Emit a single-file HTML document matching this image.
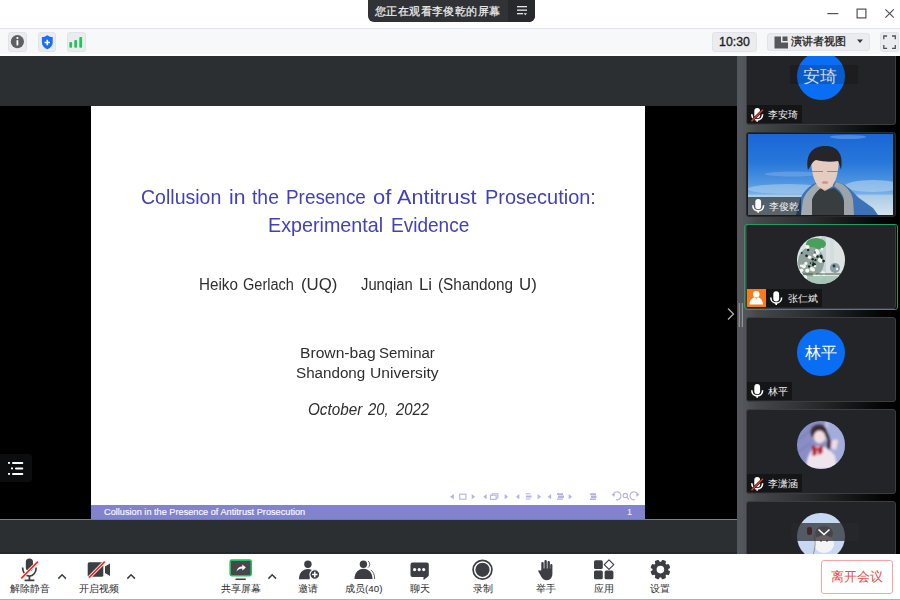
<!DOCTYPE html>
<html><head><meta charset="utf-8">
<style>
*{margin:0;padding:0;box-sizing:border-box}
html,body{width:900px;height:600px;overflow:hidden;background:#fff;font-family:"Liberation Sans",sans-serif}
.a{position:absolute}
#title{left:0;top:0;width:900px;height:28px;background:#fff}
#pill{left:368px;top:0;width:167px;height:22px;background:#303236;border-radius:0 0 6px 6px;overflow:hidden}
#pill .t{left:7px;top:2.5px;font-size:11px;letter-spacing:0.4px;-webkit-text-stroke:0.2px #f2f2f2;color:#f2f2f2;white-space:nowrap;line-height:16px}
#pill .m{left:140px;top:0;width:27px;height:22px;background:#27292c}
#tb{left:0;top:28px;width:900px;height:25.5px;background:#f7f8fa;border-top:1px solid #e3e4e7}
.ib{background:#ebecef;border:1px solid #e2e3e6;border-radius:3px}
#main{left:0;top:56px;width:737px;height:498px;background:linear-gradient(180deg,#2c2f32 0,#2c2f32 495.5px,#25282b 496.5px,#25282b 498px)}
#black{left:0;top:106px;width:737px;height:413px;background:#000}
#slide{left:91px;top:106px;width:553.6px;height:413px;background:#fff;overflow:hidden}
#teal{left:0;top:518.5px;width:737px;height:1.5px;background:#5b908e}
#sep{left:737px;top:56px;width:6px;height:498px;background:#54575b}
#panel{left:741px;top:56px;width:159px;height:498px;background:linear-gradient(90deg,#54575b 0%,#4f5256 4%,#45474b 10%,#2e3033 40%,#141516 70%,#050505 88%,#000 100%);overflow:hidden}
.tile{position:absolute;left:5px;width:150px;height:85px;background:#232427;border:1px solid #3b3d41;border-radius:3px;overflow:hidden}
.lb{position:absolute;left:0;bottom:0.8px;height:18px;background:#141517}
.nm{position:absolute;top:3px;font-size:10px;line-height:13px;color:#f0f0f0;white-space:nowrap}
.av{position:absolute;left:50px;width:47.5px;height:47.5px;border-radius:50%}
.avt{position:absolute;left:0;top:0;width:47.5px;height:47.5px;line-height:47.5px;text-align:center;color:#fff;font-size:16px}
#bot{left:0;top:553.8px;width:900px;height:46.2px;background:#fff}
#botline{left:0;top:598.6px;width:900px;height:1.4px;background:#a2b7b0}
.lbl{position:absolute;font-size:9.8px;color:#2c2c2c;white-space:nowrap;line-height:12px}

.w{position:absolute;white-space:nowrap;transform-origin:0 0}
.ttl{color:#4242b4;font-size:21px;line-height:24px}
.blk{color:#2e2e2e}
</style></head><body>
<div id="title" class="a"></div>
<div id="pill" class="a"><div class="t a">您正在观看李俊乾的屏幕</div><div class="m a"><svg width="27" height="22" style="position:absolute;left:0;top:0"><g fill="#e6e6e6"><rect x="9" y="6" width="10" height="1.3"/><rect x="9" y="9.5" width="10" height="1.3"/><rect x="9" y="13" width="6" height="1.3"/><path d="M15.5 13.2h3.5l-1.75 2z"/></g></svg></div></div>
<svg class="a" style="left:820px;top:0" width="80" height="28"><g stroke="#505256" stroke-width="1.2" fill="none"><path d="M7.3 13.6h11"/><rect x="37.1" y="9.1" width="8.8" height="8.8"/><path d="M65.4 9.3l8.4 8.4M73.8 9.3l-8.4 8.4"/></g></svg>
<div id="tb" class="a"></div>
<div class="a ib" style="left:8px;top:32px;width:19px;height:20px"></div>
<svg class="a" style="left:8px;top:32px" width="19" height="19"><circle cx="9.4" cy="9.6" r="6.6" fill="#5d5f63"/><rect x="8.5" y="8.2" width="1.8" height="5.2" fill="#fff"/><circle cx="9.4" cy="6" r="1.1" fill="#fff"/></svg>
<div class="a ib" style="left:37.5px;top:32px;width:18.5px;height:20px"></div>
<svg class="a" style="left:37.5px;top:32px" width="18" height="19"><path d="M9.3 3.2c1.8 1.3 3.5 1.9 5.4 1.9v5.2c0 3.5-2.4 5.8-5.4 7-3-1.2-5.4-3.5-5.4-7V5.1c1.9 0 3.6-.6 5.4-1.9z" fill="#1a6ff5"/><path d="M9.3 7.8v5.4M6.6 10.5h5.4" stroke="#fff" stroke-width="1.6"/></svg>
<div class="a ib" style="left:67px;top:32px;width:18.5px;height:20px"></div>
<svg class="a" style="left:67px;top:32px" width="18" height="19"><g fill="#1fc55a"><rect x="2.3" y="10" width="2.8" height="5.7" rx="1"/><rect x="7.3" y="8" width="2.8" height="7.7" rx="1"/><rect x="12.3" y="5" width="2.8" height="10.7" rx="1"/></g></svg>
<div class="a ib" style="left:712px;top:32px;width:45px;height:19.5px"></div>
<div class="a" style="left:712px;top:35px;width:45px;text-align:center;font-size:12.3px;line-height:15px;color:#1e1e1e;-webkit-text-stroke:0.35px #1e1e1e">10:30</div>
<div class="a ib" style="left:767px;top:32.5px;width:103px;height:18.5px"></div>
<svg class="a" style="left:774px;top:35.5px" width="15" height="13"><path d="M0.5 0.5h6.5v6h7v6h-13.5z" fill="#55575b"/><rect x="8.5" y="0.5" width="5" height="4.5" fill="#55575b"/></svg>
<div class="a" style="left:790.5px;top:34px;font-size:11px;line-height:15px;color:#1e1e1e;white-space:nowrap;-webkit-text-stroke:0.3px #1e1e1e">演讲者视图</div>
<svg class="a" style="left:856px;top:39px" width="8" height="5"><path d="M1 0.5h6l-3 3.5z" fill="#3a3a3a"/></svg>
<div class="a ib" style="left:880px;top:32px;width:19px;height:19.5px"></div>
<svg class="a" style="left:880px;top:32px" width="19" height="20"><g stroke="#505256" stroke-width="1.3" fill="none"><path d="M3.8 7.3V4h3.3M12 4h3.3v3.3M15.3 13v3.3H12M7.1 16.3H3.8V13"/></g></svg>
<div id="main" class="a"></div>
<div id="black" class="a"></div>
<div id="slide" class="a">
<span class="w ttl" style="left:49.77px;top:79.2px;font-size:21px;line-height:24px;font-style:normal;transform:scaleX(0.930)">Collusion</span>
<span class="w ttl" style="left:137.69px;top:79.2px;font-size:21px;line-height:24px;font-style:normal;transform:scaleX(1.007)">in</span>
<span class="w ttl" style="left:161.30px;top:79.2px;font-size:21px;line-height:24px;font-style:normal;transform:scaleX(0.921)">the</span>
<span class="w ttl" style="left:195.15px;top:79.2px;font-size:21px;line-height:24px;font-style:normal;transform:scaleX(0.900)">Presence</span>
<span class="w ttl" style="left:282.02px;top:79.2px;font-size:21px;line-height:24px;font-style:normal;transform:scaleX(1.050)">of</span>
<span class="w ttl" style="left:306.00px;top:79.2px;font-size:21px;line-height:24px;font-style:normal;transform:scaleX(1.032)">Antitrust</span>
<span class="w ttl" style="left:393.55px;top:79.2px;font-size:21px;line-height:24px;font-style:normal;transform:scaleX(0.950)">Prosecution:</span>
<span class="w ttl" style="left:176.66px;top:106.7px;font-size:21px;line-height:24px;font-style:normal;transform:scaleX(0.939)">Experimental</span>
<span class="w ttl" style="left:300.09px;top:106.7px;font-size:21px;line-height:24px;font-style:normal;transform:scaleX(0.906)">Evidence</span>
<span class="w blk" style="left:108.05px;top:170px;font-size:16px;line-height:18px;font-style:normal;transform:scaleX(0.950)">Heiko</span>
<span class="w blk" style="left:152.09px;top:170px;font-size:16px;line-height:18px;font-style:normal;transform:scaleX(0.909)">Gerlach</span>
<span class="w blk" style="left:210.32px;top:170px;font-size:16px;line-height:18px;font-style:normal;transform:scaleX(1.050)">(UQ)</span>
<span class="w blk" style="left:270.30px;top:170px;font-size:16px;line-height:18px;font-style:normal;transform:scaleX(0.923)">Junqian</span>
<span class="w blk" style="left:327.88px;top:170px;font-size:16px;line-height:18px;font-style:normal;transform:scaleX(1.050)">Li</span>
<span class="w blk" style="left:347.44px;top:170px;font-size:16px;line-height:18px;font-style:normal;transform:scaleX(0.960)">(Shandong</span>
<span class="w blk" style="left:427.98px;top:170px;font-size:16px;line-height:18px;font-style:normal;transform:scaleX(1.050)">U)</span>
<span class="w blk" style="left:208.69px;top:237.7px;font-size:15.5px;line-height:18px;font-style:normal;transform:scaleX(1.010)">Brown-bag</span>
<span class="w blk" style="left:287.83px;top:237.7px;font-size:15.5px;line-height:18px;font-style:normal;transform:scaleX(0.967)">Seminar</span>
<span class="w blk" style="left:205.12px;top:257.8px;font-size:15.5px;line-height:18px;font-style:normal;transform:scaleX(0.980)">Shandong</span>
<span class="w blk" style="left:278.89px;top:257.8px;font-size:15.5px;line-height:18px;font-style:normal;transform:scaleX(1.007)">University</span>
<span class="w blk" style="left:216.65px;top:295px;font-size:16px;line-height:18px;font-style:italic;transform:scaleX(0.954)">October</span>
<span class="w blk" style="left:277.40px;top:295px;font-size:16px;line-height:18px;font-style:italic;transform:scaleX(0.929)">20,</span>
<span class="w blk" style="left:304.60px;top:295px;font-size:16px;line-height:18px;font-style:italic;transform:scaleX(0.931)">2022</span>
<div class="a" style="left:0;top:399px;width:553.6px;height:14px;background:#8282cf"></div>
<div class="a" style="left:13px;top:400.8px;font-size:9.2px;line-height:10px;color:#fafaff;-webkit-text-stroke:0.15px #fafaff;white-space:nowrap">Collusion in the Presence of Antitrust Prosecution</div>
<div class="a" style="left:536px;top:400.8px;font-size:9.2px;line-height:10px;color:#f4f4fb">1</div>
</div>
<div id="teal" class="a"></div>
<svg class="a" style="left:445px;top:488px" width="200" height="16"><g transform="translate(-445,-488)" fill="#b4b4e2" stroke="none">
<path d="M450 496.7l3.8-2.6v5.2z"/><rect x="459.7" y="494.2" width="6.2" height="5" fill="none" stroke="#b4b4e2" stroke-width="1.1"/><path d="M475 496.7l-3.3-2.6v5.2z"/>
<path d="M483.3 496.7l3.3-2.6v5.2z"/><rect x="490.5" y="495.2" width="5.6" height="4.2" fill="none" stroke="#b4b4e2" stroke-width="1.1"/><path d="M492.3 495.2v-1.4h5.6v4.2h-1.7" fill="none" stroke="#b4b4e2" stroke-width="1.1"/><path d="M508 496.7l-3.3-2.6v5.2z"/>
<path d="M516 496.7l3.3-2.6v5.2z"/><path d="M525.5 493.3h5v1h-5zM526 495.5h5.5v2h-5.5zM525.5 498.6h5v1h-5z"/><path d="M541 496.7l-3.3-2.6v5.2z"/>
<path d="M547.8 496.7l3.3-2.6v5.2z"/><path d="M557 493.3h6v1.6h-6zM558 495.5h6v2.4h-6zM557 498.4h6v1.4h-6z"/><path d="M572 496.7l-3.3-2.6v5.2z"/>
<path d="M590 493.3h6v1.6h-6zM591 495.5h5.5v2.4h-5.5zM590 498.4h6v1.6h-6z"/>
<path d="M613 495.5a4 4 0 1 1 3 4.2" fill="none" stroke="#b4b4e2" stroke-width="1.1"/><path d="M611.5 494l3.5-.2-.8 3.2z"/>
<circle cx="625.3" cy="495.6" r="2.2" fill="none" stroke="#b4b4e2" stroke-width="1.1"/><path d="M626.8 497.2l2.2 2.4" stroke="#b4b4e2" stroke-width="1.2"/>
<path d="M638 495.5a4 4 0 1 0 -3 4.2" fill="none" stroke="#b4b4e2" stroke-width="1.1"/><path d="M639.5 494l-3.5-.2.8 3.2z"/>
</g></svg>
<div class="a" style="left:0;top:454px;width:32px;height:27.5px;background:#0c0d0f;border-radius:0 4px 4px 0"></div>
<svg class="a" style="left:0;top:454px" width="32" height="28"><g fill="#fff"><rect x="8" y="8" width="2" height="1.8"/><rect x="12" y="7.9" width="11.3" height="2" rx="1"/><rect x="11" y="13.5" width="2" height="1.8"/><rect x="15" y="13.4" width="8.3" height="2" rx="1"/><rect x="8" y="19" width="2" height="1.8"/><rect x="12" y="18.9" width="11.3" height="2" rx="1"/></g></svg>
<div id="sep" class="a"></div>
<div id="panel" class="a">
<div class="tile" style="top:-16.2px">
 <div class="av" style="top:11.2px;background:#0a6ef5"></div>
 <div class="a" style="left:43px;top:24.2px;width:68px;height:19px;background:rgba(0,0,0,0.17)"></div>
 <div class="a" style="left:56px;top:26.2px;font-size:16.5px;line-height:18px;color:#d6d6d6;white-space:nowrap">安琦</div>
 <div class="lb" style="width:55px"><svg class="a" style="left:3px;top:1.5px" width="15" height="16"><rect x="4.3" y="1" width="5.8" height="10.2" rx="2.9" fill="#fff"/><path d="M1.8 7.2c0 3.4 2.4 5.7 5.4 5.7s5.4-2.3 5.4-5.7" stroke="#fff" stroke-width="1.6" fill="none"/><path d="M7.2 12.8v2" stroke="#fff" stroke-width="1.6"/><path d="M1.5 14.2L13 2.8" stroke="#141517" stroke-width="2.6"/><path d="M1.5 14.2L13 2.8" stroke="#e8362f" stroke-width="1.4"/></svg><div class="nm" style="left:21px">李安琦</div></div>
</div>
<div class="tile" style="top:75.5px;border-color:#2a2b2e;background:#1a1b1d">
 <div class="a" id="vid" style="left:1px;top:1px;width:145px;height:81px;overflow:hidden;background:linear-gradient(180deg,#1a66d6 0%,#2777da 35%,#4f95e0 60%,#79b0e6 74%,#a9cbe6 76%,#cfe0ec 100%)"><svg class="a" style="left:0;top:0" width="145" height="81">
<defs><linearGradient id="sea" x1="0" y1="0" x2="0" y2="1"><stop offset="0" stop-color="#a9cbe6"/><stop offset="1" stop-color="#d3e3ee"/></linearGradient><filter id="bl"><feGaussianBlur stdDeviation="0.7"/></filter></defs>
<g filter="url(#bl)">
<rect x="0" y="61" width="145" height="20" fill="url(#sea)"/>
<ellipse cx="40" cy="55" rx="40" ry="5" fill="#a7cbee" opacity="0.6"/>
<ellipse cx="125" cy="52" rx="28" ry="6" fill="#b5d3f0" opacity="0.6"/>
<ellipse cx="45" cy="40" rx="28" ry="2.5" fill="#7fb2e6" opacity="0.5"/>
<ellipse cx="100" cy="3" rx="18" ry="2" fill="#7fb2e6" opacity="0.5"/>
<path d="M48 81l4-15c2-6 6-11 13-16l9-3h12l9 3c7 4 11 9 16 14l14 10 5 7z" fill="#3d72b8"/>
<path d="M53 81l2-15c2-6 6-11 14-17l5-1 2 4c-6 4-10 8-12 14v15z" fill="#a4a9ad"/>
<path d="M88 48l6 2c6 4 10 9 11 16l1 15h-10v-15c-1-6-4-10-10-14z" fill="#9ea3a7"/>
<path d="M64 81v-15c2-6 6-10 12-14l2 4 8-2c6 4 9 8 10 14v13z" fill="#393d41"/>
<path d="M69 42h16v10l-8 5-8-5z" fill="#d9bcad"/>
<path d="M63 22c0 18 4 33 14 33s14-15 14-33z" fill="#e4cdc0"/>
<path d="M60 36c-3-16 5-24 17-24s19 7 16 24c-1-4-2-7-3-9-6 1-14 1-22-1-3 1-5 5-8 10z" fill="#26262a"/>
<path d="M64 37.5h11M79 37.5h11" stroke="#7d6e66" stroke-width="0.9" opacity="0.8"/>
<ellipse cx="77" cy="48.5" rx="3.2" ry="1.3" fill="#d48c8c"/>
</g>
</svg></div>
 <div class="lb" style="left:1px;bottom:1px;width:53px;background:rgba(20,22,26,0.62)"><svg class="a" style="left:3px;top:1.5px" width="15" height="16"><rect x="4.3" y="1" width="5.8" height="10.2" rx="2.9" fill="#fff"/><path d="M1.8 7.2c0 3.4 2.4 5.7 5.4 5.7s5.4-2.3 5.4-5.7" stroke="#fff" stroke-width="1.6" fill="none"/><path d="M7.2 12.8v2" stroke="#fff" stroke-width="1.6"/></svg><div class="nm" style="left:21px">李俊乾</div></div>
</div>
<div class="tile" style="top:168px">
 <div class="av" style="top:11px;overflow:hidden;background:#dde3e2"><svg width="48" height="48" style="position:absolute;left:0;top:0"><defs><filter id="fb"><feGaussianBlur stdDeviation="0.6"/></filter></defs><g filter="url(#fb)">
<rect x="24" y="0" width="5" height="48" fill="#b7ccd0" opacity="0.7"/>
<rect x="33" y="0" width="4" height="30" fill="#cfdcdc" opacity="0.8"/>
<ellipse cx="19" cy="8" rx="10" ry="6" fill="#4aa05c"/>
<ellipse cx="14" cy="26" rx="13" ry="15" fill="#8fa29c"/>
<circle cx="8.9" cy="27.4" r="1.6" fill="#f4f6f4"/><circle cx="18.1" cy="30.0" r="1.3" fill="#f4f6f4"/><circle cx="3.3" cy="36.8" r="1.5" fill="#f4f6f4"/><circle cx="8.9" cy="41.9" r="1.7" fill="#f4f6f4"/><circle cx="23.9" cy="25.2" r="1.8" fill="#f4f6f4"/><circle cx="6.8" cy="30.3" r="2.1" fill="#f4f6f4"/><circle cx="16.1" cy="33.7" r="1.9" fill="#f4f6f4"/><circle cx="4.6" cy="34.3" r="1.8" fill="#f4f6f4"/><circle cx="10.5" cy="11.0" r="2.1" fill="#f4f6f4"/><circle cx="14.8" cy="33.0" r="2.1" fill="#f4f6f4"/><circle cx="20.9" cy="39.5" r="1.6" fill="#f4f6f4"/><circle cx="23.0" cy="24.2" r="2.1" fill="#f4f6f4"/><circle cx="25.0" cy="13.1" r="1.3" fill="#f4f6f4"/><circle cx="8.4" cy="40.9" r="1.6" fill="#f4f6f4"/><circle cx="18.7" cy="19.6" r="1.7" fill="#f4f6f4"/><circle cx="12.6" cy="21.2" r="1.8" fill="#f4f6f4"/><circle cx="17.6" cy="38.9" r="1.9" fill="#f4f6f4"/><circle cx="26.2" cy="37.4" r="2.2" fill="#f4f6f4"/><circle cx="19.8" cy="15.2" r="2.1" fill="#f4f6f4"/><circle cx="27.1" cy="39.0" r="1.8" fill="#f4f6f4"/><circle cx="20.8" cy="16.8" r="2.0" fill="#f4f6f4"/><circle cx="17.3" cy="19.1" r="1.3" fill="#f4f6f4"/><circle cx="24.3" cy="41.7" r="1.3" fill="#f4f6f4"/><circle cx="23.0" cy="23.1" r="1.4" fill="#f4f6f4"/><circle cx="10.3" cy="34.6" r="2.1" fill="#f4f6f4"/><circle cx="4.1" cy="29.7" r="1.2" fill="#f4f6f4"/><circle cx="20.5" cy="20.6" r="1.3" fill="#1f2a26"/><circle cx="26.6" cy="25.1" r="1.4" fill="#1f2a26"/><circle cx="11.1" cy="14.0" r="1.2" fill="#1f2a26"/><circle cx="4.7" cy="17.1" r="1.0" fill="#1f2a26"/><circle cx="18.0" cy="16.1" r="0.8" fill="#1f2a26"/><circle cx="24.0" cy="20.2" r="1.4" fill="#1f2a26"/><circle cx="24.6" cy="21.8" r="1.1" fill="#1f2a26"/><circle cx="16.0" cy="28.7" r="1.2" fill="#1f2a26"/><circle cx="16.9" cy="28.1" r="1.4" fill="#1f2a26"/><circle cx="15.7" cy="23.2" r="1.2" fill="#1f2a26"/><circle cx="9.5" cy="19.8" r="1.4" fill="#1f2a26"/><circle cx="16.0" cy="26.3" r="0.8" fill="#1f2a26"/><circle cx="13.5" cy="27.1" r="0.8" fill="#1f2a26"/><circle cx="18.2" cy="28.4" r="0.8" fill="#1f2a26"/><circle cx="18.4" cy="24.1" r="1.2" fill="#1f2a26"/><circle cx="12.1" cy="30.4" r="1.2" fill="#1f2a26"/>
<path d="M6 38h40" stroke="#4a5a4a" stroke-width="1.2"/>
<ellipse cx="38" cy="32" rx="5" ry="5" fill="#8aa0a6"/>
<circle cx="37" cy="30" r="1.4" fill="#2a3540"/><circle cx="40" cy="33" r="1.2" fill="#f0f2f2"/>
<rect x="10" y="40" width="36" height="8" fill="#9cc0ae" opacity="0.8"/>
</g></svg></div>
 <div class="lb" style="width:75px;background:#141517"><div class="a" style="left:0;top:0;width:19px;height:18px;background:#f77a1c"></div><svg class="a" style="left:0;top:0" width="19" height="18"><circle cx="9.3" cy="5.2" r="3.2" fill="#fff"/><path d="M2.5 15.6c.3-4 2.5-6.8 5.3-7.3l1.5 1.8 1.5-1.8c2.8.5 5 3.3 5.3 7.3z" fill="#fff"/></svg><svg class="a" style="left:19px;top:0" width="18" height="18"><g transform="translate(3,1.2)"><rect x="4.3" y="1" width="5.8" height="10.2" rx="2.9" fill="#fff"/><path d="M1.8 7.2c0 3.4 2.4 5.7 5.4 5.7s5.4-2.3 5.4-5.7" stroke="#fff" stroke-width="1.6" fill="none"/><path d="M7.2 12.8v2" stroke="#fff" stroke-width="1.6"/></g></svg><div class="nm" style="left:41px">张仁斌</div></div>
</div>
<div class="a" style="left:3px;top:167.5px;width:153.5px;height:86px;border:1.6px solid #20a05a;border-radius:3px"></div>
<div class="tile" style="top:260.5px">
 <div class="av" style="top:11px;background:#0a6ef5"><div class="avt">林平</div></div>
 <div class="lb" style="width:45px"><svg class="a" style="left:3px;top:1.5px" width="15" height="16"><rect x="4.3" y="1" width="5.8" height="10.2" rx="2.9" fill="#fff"/><path d="M1.8 7.2c0 3.4 2.4 5.7 5.4 5.7s5.4-2.3 5.4-5.7" stroke="#fff" stroke-width="1.6" fill="none"/><path d="M7.2 12.8v2" stroke="#fff" stroke-width="1.6"/></svg><div class="nm" style="left:21px">林平</div></div>
</div>
<div class="tile" style="top:353px">
 <div class="av" style="top:11px;overflow:hidden;background:#8a8ec6"><svg width="48" height="48" style="position:absolute;left:0;top:0"><defs><filter id="gb"><feGaussianBlur stdDeviation="0.9"/></filter></defs><g filter="url(#gb)">
<rect x="30" y="0" width="18" height="48" fill="#a3addc"/>
<rect x="28" y="0" width="3" height="20" fill="#d0d0e6" opacity="0.8"/>
<path d="M0 20l18-14M0 32l14-10" stroke="#7474aa" stroke-width="1.5" opacity="0.6"/>
<ellipse cx="22" cy="11" rx="8.5" ry="7.5" fill="#3c2c38"/>
<path d="M29 12c3 5 4 11 2 17" stroke="#3a2a34" stroke-width="3.5" fill="none"/>
<ellipse cx="22.5" cy="16" rx="5.8" ry="6.5" fill="#f2dede"/>
<path d="M9 48c0-12 5-22 13-23 7 0 12 5 16 10l2 13z" fill="#efe4ee"/>
<path d="M35 20c2-2 5-2 6 0l-2 9-5-2z" fill="#f0dbe6"/>
<path d="M15 24l5 3-.5 7-4 1zM20 27l6-3-.5 8-4 2z" fill="#b82230"/>
</g></svg></div>
 <div class="lb" style="width:55px"><svg class="a" style="left:3px;top:1.5px" width="15" height="16"><rect x="4.3" y="1" width="5.8" height="10.2" rx="2.9" fill="#fff"/><path d="M1.8 7.2c0 3.4 2.4 5.7 5.4 5.7s5.4-2.3 5.4-5.7" stroke="#fff" stroke-width="1.6" fill="none"/><path d="M7.2 12.8v2" stroke="#fff" stroke-width="1.6"/><path d="M1.5 14.2L13 2.8" stroke="#141517" stroke-width="2.6"/><path d="M1.5 14.2L13 2.8" stroke="#e8362f" stroke-width="1.4"/></svg><div class="nm" style="left:21px">李潇涵</div></div>
</div>
<div class="tile" style="top:445px">
 <div class="av" style="top:10.75px;overflow:hidden;background:#c7d9f2"><svg width="48" height="48" style="position:absolute;left:0;top:0"><defs><filter id="cb"><feGaussianBlur stdDeviation="0.7"/></filter></defs><g filter="url(#cb)">
<ellipse cx="27" cy="20" rx="9" ry="7" fill="#8f8f98"/>
<ellipse cx="27" cy="31" rx="10" ry="9" fill="#f4f4f6"/>
<path d="M17 22c2 6 1 14-1 20" stroke="#9a8a80" stroke-width="1" fill="none"/>
<rect x="10" y="14" width="5" height="8" rx="2" fill="#8a2020"/>
<circle cx="24" cy="28" r="1" fill="#e05050"/><circle cx="30" cy="28" r="1" fill="#e05050"/>
</g></svg></div>
 <div class="a" style="left:44px;top:20.5px;width:67.5px;height:18.5px;background:rgba(40,40,44,0.72);border-radius:2px"></div>
 <svg class="a" style="left:69.2px;top:24px" width="16" height="12"><path d="M2.5 3.5l5.5 5 5.5-5" stroke="#fff" stroke-width="1.6" fill="none"/></svg>
</div>
</div>
<svg class="a" style="left:726px;top:306px" width="10" height="16"><path d="M2 2.5l5.5 5.5-5.5 5.5" stroke="#b0b0b0" stroke-width="1.3" fill="none"/></svg>
<svg class="a" style="left:737px;top:302px" width="8" height="26"><path d="M2.2 1v24M5.3 1v24" stroke="#a9abae" stroke-width="0.9"/></svg>

<div id="bot" class="a"></div>
<svg class="a" style="left:0;top:553px" width="700" height="45">
<g transform="translate(0,-553)">
<!-- mic muted -->
<rect x="25.8" y="558.4" width="7.2" height="12.6" rx="3.6" fill="#3d3e43"/>
<path d="M22.6 567.5c0 5.2 3.2 8.6 6.8 8.6s6.8-3.4 6.8-8.6" stroke="#3d3e43" stroke-width="1.7" fill="none"/>
<path d="M29.4 576v4M24.6 580.3h9.8" stroke="#3d3e43" stroke-width="1.7"/>
<path d="M21.3 578.3L37.9 561.6" stroke="#fff" stroke-width="3.2"/>
<path d="M21.3 578.3L37.9 561.6" stroke="#f52a2a" stroke-width="1.7"/>
<path d="M58.3 578.6l3.8-3.8 3.8 3.8" stroke="#3d3e43" stroke-width="1.5" fill="none"/>
<!-- video muted -->
<rect x="87.7" y="562.3" width="15.6" height="14.5" rx="1.6" fill="#3d3e43"/>
<path d="M105 566.6l5-3.1v12.6l-5-3.1z" fill="#3d3e43"/>
<path d="M89 577.6L104.8 561.6" stroke="#fff" stroke-width="3.4"/>
<path d="M89 577.6L104.8 561.6" stroke="#f52a2a" stroke-width="1.7"/>
<path d="M127.3 578.6l3.8-3.8 3.8 3.8" stroke="#3d3e43" stroke-width="1.5" fill="none"/>
<!-- share -->
<rect x="230.2" y="560.1" width="21" height="15.6" rx="1.6" fill="#48474c" stroke="#1ec35c" stroke-width="1.6"/>
<path d="M236.5 571.5c0.6-3.2 2.8-5 5.8-5v-2l3.6 3-3.6 3v-2c-2.3 0-4.4 1-5.8 3z" fill="#fff"/>
<rect x="235.3" y="578.4" width="10.7" height="1.7" rx="0.8" fill="#3d3e43"/>
<path d="M268.4 578.6l3.8-3.8 3.8 3.8" stroke="#3d3e43" stroke-width="1.5" fill="none"/>
<!-- invite -->
<circle cx="307.9" cy="564.3" r="3.7" fill="#3d3e43"/>
<path d="M299 579.3c0-6 3.6-10.2 8.9-10.2 2.5 0 4.6.9 6.1 2.4-2.6 1-4.4 3.9-4.4 7.8z" fill="#3d3e43"/>
<circle cx="314.8" cy="574.5" r="4.9" fill="#3d3e43" stroke="#fff" stroke-width="1.1"/>
<path d="M314.8 571.8v5.4M312.1 574.5h5.4" stroke="#fff" stroke-width="1.5"/>
<!-- members -->
<circle cx="363.4" cy="564.3" r="3.7" fill="#3d3e43"/>
<path d="M354.5 579c0-6 3.7-10.2 9-10.2s9 4.2 9 10.2z" fill="#3d3e43"/>
<path d="M367.9 560.9a4 4 0 0 1 0 6.8M370.8 569.8c2.4 1.8 3.9 5 3.9 9.2" stroke="#3d3e43" stroke-width="0.8" fill="none"/>
<!-- chat -->
<path d="M412.5 562.5h14.3a2 2 0 0 1 2 2v10.5c0 .8-.4 1.3-1 1.7l-4.3 3.2v-2.9h-11a2 2 0 0 1-2-2v-10.5a2 2 0 0 1 2-2z" fill="#3d3e43"/>
<circle cx="414.6" cy="569.6" r="1.6" fill="#fff"/><circle cx="419.2" cy="569.6" r="1.6" fill="#fff"/><circle cx="423.7" cy="569.6" r="1.6" fill="#fff"/>
<!-- record -->
<circle cx="482.5" cy="569.8" r="9.4" fill="none" stroke="#3d3e43" stroke-width="1.7"/>
<circle cx="482.5" cy="569.8" r="7.1" fill="#3d3e43"/>
<!-- hand -->
<path d="M541.3 570.5V563.2a1.2 1.2 0 0 1 2.4 0V568.5h.7V561.2a1.2 1.2 0 0 1 2.4 0V568.5h.7V562.2a1.2 1.2 0 0 1 2.4 0V568.5h.3V565a1.1 1.1 0 0 1 2.2 0V573.8c0 3.8-2.4 6.4-5.6 6.4-2.6 0-4.3-1.5-5.5-3.5l-2.9-5.2c-.5-.9.4-1.7 1.2-1.1z" fill="#3d3e43"/>
<!-- apps -->
<rect x="594" y="560.3" width="8.8" height="8.8" rx="1.6" fill="#3d3e43"/>
<rect x="594" y="570.5" width="8.8" height="8.8" rx="1.6" fill="#3d3e43"/>
<rect x="604.6" y="570.5" width="8.8" height="8.8" rx="1.6" fill="#3d3e43"/>
<path d="M609 559.8l4.8 4.8-4.8 4.8-4.8-4.8z" fill="none" stroke="#3d3e43" stroke-width="1.2" stroke-linejoin="round"/>
<!-- settings -->
<g transform="translate(660.4,569.6)" fill="#3d3e43">
<rect x="-2.3" y="-9.9" width="4.6" height="5" rx="1.2" transform="rotate(22.5)"/><rect x="-2.3" y="-9.9" width="4.6" height="5" rx="1.2" transform="rotate(67.5)"/><rect x="-2.3" y="-9.9" width="4.6" height="5" rx="1.2" transform="rotate(112.5)"/><rect x="-2.3" y="-9.9" width="4.6" height="5" rx="1.2" transform="rotate(157.5)"/><rect x="-2.3" y="-9.9" width="4.6" height="5" rx="1.2" transform="rotate(202.5)"/><rect x="-2.3" y="-9.9" width="4.6" height="5" rx="1.2" transform="rotate(247.5)"/><rect x="-2.3" y="-9.9" width="4.6" height="5" rx="1.2" transform="rotate(292.5)"/><rect x="-2.3" y="-9.9" width="4.6" height="5" rx="1.2" transform="rotate(337.5)"/>
<circle r="5.85" fill="none" stroke="#3d3e43" stroke-width="4.1"/>
</g>
</g></svg>
<div class="a" style="left:820.5px;top:559.5px;width:72px;height:34px;border:1px solid #f7a4a4;border-radius:3px;background:#fff"></div>
<div class="a" style="left:820.5px;top:569px;width:72px;text-align:center;font-size:13px;line-height:16px;color:#ee4a44;white-space:nowrap">离开会议</div>
<div class="lbl a" style="left:-10.5px;top:583.2px;width:80px;text-align:center">解除静音</div>
<div class="lbl a" style="left:58.900000000000006px;top:583.2px;width:80px;text-align:center">开启视频</div>
<div class="lbl a" style="left:200.6px;top:583.2px;width:80px;text-align:center">共享屏幕</div>
<div class="lbl a" style="left:268.1px;top:583.2px;width:80px;text-align:center">邀请</div>
<div class="lbl a" style="left:323.7px;top:583.2px;width:80px;text-align:center">成员(40)</div>
<div class="lbl a" style="left:379.6px;top:583.2px;width:80px;text-align:center">聊天</div>
<div class="lbl a" style="left:442.5px;top:583.2px;width:80px;text-align:center">录制</div>
<div class="lbl a" style="left:505.6px;top:583.2px;width:80px;text-align:center">举手</div>
<div class="lbl a" style="left:563.5px;top:583.2px;width:80px;text-align:center">应用</div>
<div class="lbl a" style="left:620.4px;top:583.2px;width:80px;text-align:center">设置</div>
<div id="botline" class="a"></div>
</body></html>
